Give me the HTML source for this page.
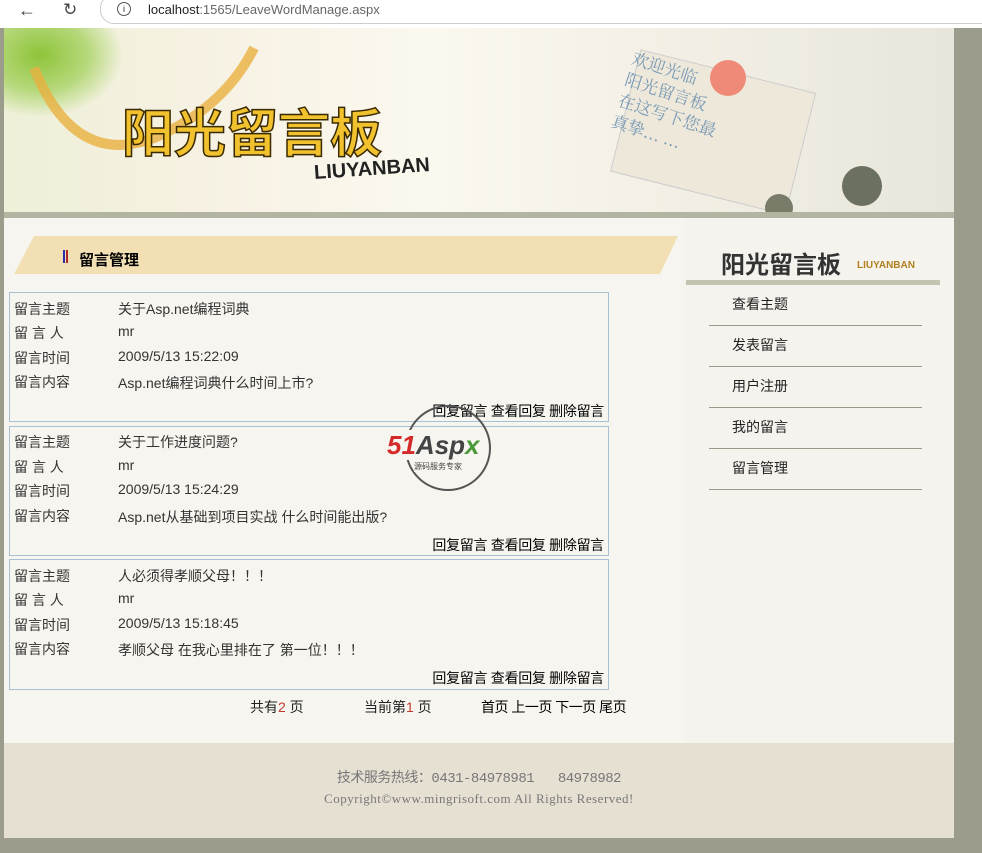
<!DOCTYPE html>
<html><head><meta charset="utf-8"><style>
*{margin:0;padding:0;box-sizing:border-box}
body{width:982px;height:853px;position:relative;overflow:hidden;background:#9c9c8c;font-family:"Liberation Sans","Noto Sans CJK SC",sans-serif;font-size:14px;color:#222}
.a{position:absolute}
.bar{left:0;top:0;width:982px;height:28px;background:#fff}
.url{left:100px;top:-6px;width:900px;height:30px;border:1px solid #ccc;border-radius:14px;background:#fff}
.hdr{left:4px;top:28px;width:950px;height:190px;background:linear-gradient(90deg,#eef0d8 0%,#f6f1e2 20%,#fbf8ef 45%,#f3efe4 70%,#e8e6dc 100%)}
.main{left:4px;top:218px;width:950px;height:525px;background:#f7f5ef}
.side{left:683px;top:218px;width:271px;height:525px;background:#f5f3ed}
.foot{left:4px;top:743px;width:950px;height:95px;background:#e6e0d3}
.box{left:9px;width:600px;border:1px solid #a9bfd3}
.row{position:absolute;left:4px;font-size:14px;color:#333}
.v{position:absolute;left:108px;font-size:14px;color:#333}
.ops{position:absolute;right:4px;font-size:14px;color:#000;letter-spacing:-0.3px}
.nav{position:absolute;left:709px;width:213px;border-bottom:1px solid #9a9a8a;height:41px;padding-left:23px;line-height:38px;font-size:14px}
</style></head><body>
<div class="a bar"></div>
<div class="a url"></div>
<div class="a" style="left:18px;top:0;font-size:18px;color:#444">←</div>
<div class="a" style="left:63px;top:0;font-size:17px;color:#444">↻</div>
<div class="a" style="left:117px;top:2px;width:14px;height:14px;border:1px solid #555;border-radius:50%;font-size:9px;text-align:center;line-height:12px">i</div>
<div class="a" style="left:148px;top:2px;font-size:13px;color:#222">localhost<span style="color:#666">:1565/LeaveWordManage.aspx</span></div>
<div class="a hdr"></div>
<div class="a" style="left:4px;top:28px;width:120px;height:90px;background:radial-gradient(ellipse at 30% 30%,#8fc43a 0%,#b5d87a 40%,rgba(240,240,220,0) 70%)"></div>
<svg class="a" style="left:4px;top:28px" width="950" height="190"><path d="M30 40 Q70 140 150 110 Q220 80 250 20" stroke="#e8b040" stroke-width="10" fill="none" opacity=".8"/>
<g transform="rotate(14 700 120)"><rect x="615" y="40" width="180" height="125" fill="#eee8da" stroke="#ccc"/></g>
<circle cx="724" cy="50" r="18" fill="#f08a78"/>
<circle cx="858" cy="158" r="20" fill="#6c7060"/><circle cx="775" cy="180" r="14" fill="#7a7c6a"/>
<rect x="0" y="184" width="950" height="6" fill="#b4b4a2"/></svg>
<div class="a" style="left:122px;top:98px;font-size:52px;font-weight:bold;color:#f2c12e;-webkit-text-stroke:1.5px #3a2a00;font-family:'Noto Sans CJK SC',sans-serif;line-height:64px">阳光留言板</div>
<div class="a" style="left:314px;top:158px;font-size:20px;font-weight:bold;color:#222;transform:rotate(-4deg)">LIUYANBAN</div>
<div class="a" style="left:620px;top:60px;font-size:17px;color:#7a9ab5;transform:rotate(18deg);line-height:22px;font-family:'Noto Serif CJK SC',serif">欢迎光临<br>阳光留言板<br>在这写下您最<br>真挚... ...</div>
<div class="a main"></div>
<div class="a side"></div>
<svg class="a" style="left:14px;top:236px" width="664" height="38"><polygon points="20,0 664,0 646,38 0,38" fill="#f2e0b4"/></svg>
<div class="a" style="left:63px;top:250px;width:2px;height:13px;background:#2b2bb0"></div>
<div class="a" style="left:66px;top:250px;width:2px;height:13px;background:#b0282a"></div>
<div class="a" style="left:79px;top:249px;font-size:15px;font-weight:bold;color:#000">留言管理</div>
<div class="a" style="left:721px;top:245px;font-size:24px;font-weight:bold;color:#333;font-family:'Noto Sans CJK SC',sans-serif">阳光留言板</div>
<div class="a" style="left:857px;top:260px;font-size:10px;font-weight:bold;color:#b08020">LIUYANBAN</div>
<div class="a" style="left:686px;top:280px;width:254px;height:5px;background:#c4c2b0"></div>
<div class="nav" style="top:285px">查看主题</div>
<div class="nav" style="top:326px">发表留言</div>
<div class="nav" style="top:367px">用户注册</div>
<div class="nav" style="top:408px">我的留言</div>
<div class="nav" style="top:449px">留言管理</div>

<div class="a box" style="top:292px;height:130px">
<div class="row" style="top:6px">留言主题</div><div class="v" style="top:6px">关于Asp.net编程词典</div>
<div class="row" style="top:30px">留 言 人</div><div class="v" style="top:30px">mr</div>
<div class="row" style="top:55px">留言时间</div><div class="v" style="top:55px">2009/5/13 15:22:09</div>
<div class="row" style="top:79px">留言内容</div><div class="v" style="top:80px">Asp.net编程词典什么时间上市?</div>
<div class="ops" style="top:108px">回复留言 查看回复 删除留言</div></div>
<div class="a box" style="top:426px;height:130px">
<div class="row" style="top:5px">留言主题</div><div class="v" style="top:5px">关于工作进度问题?</div>
<div class="row" style="top:30px">留 言 人</div><div class="v" style="top:30px">mr</div>
<div class="row" style="top:54px">留言时间</div><div class="v" style="top:54px">2009/5/13 15:24:29</div>
<div class="row" style="top:79px">留言内容</div><div class="v" style="top:80px">Asp.net从基础到项目实战 什么时间能出版?</div>
<div class="ops" style="top:108px">回复留言 查看回复 删除留言</div></div>
<div class="a box" style="top:559px;height:131px">
<div class="row" style="top:6px">留言主题</div><div class="v" style="top:6px">人必须得孝顺父母！！！</div>
<div class="row" style="top:30px">留 言 人</div><div class="v" style="top:30px">mr</div>
<div class="row" style="top:55px">留言时间</div><div class="v" style="top:55px">2009/5/13 15:18:45</div>
<div class="row" style="top:79px">留言内容</div><div class="v" style="top:80px">孝顺父母 在我心里排在了 第一位！！！</div>
<div class="ops" style="top:108px">回复留言 查看回复 删除留言</div></div>

<div class="a" style="left:405px;top:405px;width:86px;height:86px;border:2px solid #555;border-radius:50%"></div>
<div class="a" style="left:387px;top:430px;font-size:26px;font-weight:bold;font-style:italic;color:#d42a2a;background:#f7f5ef;line-height:30px">51<span style="color:#444">Asp</span><span style="color:#4a9a3a">x</span></div>
<div class="a" style="left:414px;top:461px;font-size:8px;color:#444;background:#f7f5ef">源码服务专家</div>

<div class="a" style="left:250px;top:697px;font-size:14px">共有<span style="color:#c0392b">2</span> 页</div>
<div class="a" style="left:364px;top:697px;font-size:14px">当前第<span style="color:#c0392b">1</span> 页</div>
<div class="a" style="left:481px;top:697px;font-size:14px;color:#000;letter-spacing:-0.5px">首页 上一页 下一页 尾页</div>
<div class="a foot"></div>
<div class="a" style="left:4px;top:767px;width:950px;text-align:center;font-size:14px;color:#777;font-family:'Liberation Mono','Noto Sans CJK SC',monospace;letter-spacing:-0.5px">技术服务热线：0431-84978981&nbsp;&nbsp;&nbsp;84978982</div>
<div class="a" style="left:4px;top:791px;width:950px;text-align:center;font-size:13px;color:#777;font-family:'Liberation Serif',serif;letter-spacing:.5px">Copyright©www.mingrisoft.com All Rights Reserved!</div>
</body></html>
